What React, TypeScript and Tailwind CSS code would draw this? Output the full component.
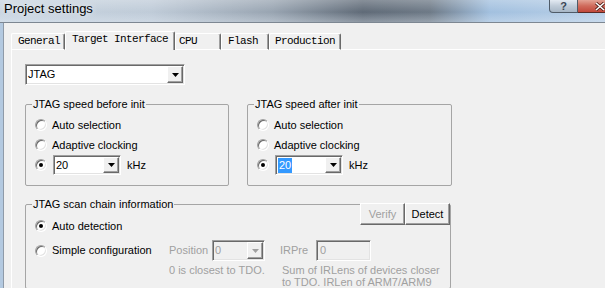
import type { ReactNode } from "react";

const sunken =
  "border border-t-[#a0a0a0] border-l-[#a0a0a0] border-b-white border-r-white shadow-[inset_1px_1px_0_#696969,inset_-1px_-1px_0_#e3e3e3]";

const raised =
  "border border-t-white border-l-white border-b-[#696969] border-r-[#696969] shadow-[inset_-1px_-1px_0_#a0a0a0] bg-[#f0f0f0]";

function Radio({ checked = false }: { checked?: boolean }) {
  return (
    <span
      className={`flex h-[12px] w-[12px] shrink-0 items-center justify-center rounded-full bg-white ${sunken}`}
    >
      {checked && <span className="h-[4px] w-[4px] rounded-full bg-black" />}
    </span>
  );
}

function Arrow({ disabled = false }: { disabled?: boolean }) {
  return (
    <span className={`flex h-full w-[16px] shrink-0 items-center justify-center ${raised}`}>
      <svg width="7" height="4" viewBox="0 0 7 4">
        <path d="M0 0h7L3.5 4z" fill={disabled ? "#a0a0a0" : "#000"} />
      </svg>
    </span>
  );
}

function Combo({
  width,
  children,
  disabled = false,
}: {
  width: string;
  children: ReactNode;
  disabled?: boolean;
}) {
  return (
    <div
      className={`flex h-[21px] shrink-0 items-stretch p-[1px] ${width} ${sunken} ${
        disabled ? "bg-[#f0f0f0] text-[#a0a0a0]" : "bg-white"
      }`}
    >
      <span className="flex flex-1 items-center pl-[1px]">{children}</span>
      <Arrow disabled={disabled} />
    </div>
  );
}

function RadioRow({ checked, label }: { checked?: boolean; label: string }) {
  return (
    <div className="flex h-[20px] items-center pl-[9px]">
      <Radio checked={checked} />
      <span className="ml-[5px]">{label}</span>
    </div>
  );
}

function SpeedGroup({
  title,
  width,
  selected = false,
}: {
  title: string;
  width: string;
  selected?: boolean;
}) {
  return (
    <fieldset className={`${width} rounded-[2px] border border-[#a5a5a5] pt-[4px] pb-[10px]`}>
      <legend className="ml-[6px] px-[1px] leading-[13px]">{title}</legend>
      <RadioRow label="Auto selection" />
      <RadioRow label="Adaptive clocking" />
      <div className="flex h-[20px] items-center pl-[9px]">
        <Radio checked />
        <div className="ml-[6px]">
          <div className={`flex h-[20px] w-[68px] items-stretch bg-white p-[1px] ${sunken}`}>
            <span className="flex flex-1 items-center pl-[1px]">
              {selected ? (
                <span className="bg-[#3399ff] px-[1px] leading-[15px] text-white">20</span>
              ) : (
                "20"
              )}
            </span>
            <Arrow />
          </div>
        </div>
        <span className="ml-[6px]">kHz</span>
      </div>
    </fieldset>
  );
}

const tabs = [
  { label: "General", w: "w-[54px]", pl: "pl-[6px]" },
  { label: "Target Interface", w: "w-[110px]", pl: "pl-[6px]", active: true },
  { label: "CPU", w: "w-[46px]", pl: "pl-[3px]" },
  { label: "Flash", w: "w-[48px]", pl: "pl-[6px]" },
  { label: "Production", w: "w-[72px]", pl: "pl-[5px]" },
];

export default function App() {
  return (
    <div className="flex h-[288px] w-[605px] flex-col overflow-hidden bg-[#f0f0f0] font-['Liberation_Sans',Arial,sans-serif] text-[11px] text-black">
      {/* title bar */}
      <div className="flex h-[23px] shrink-0 items-start border-b border-b-[#7d8792] bg-[linear-gradient(180deg,rgba(255,255,255,0.25)_0%,rgba(255,255,255,0)_55%,rgba(230,238,246,0.35)_100%),linear-gradient(90deg,#c9d5e1_0%,#bfcbd8_25%,#98a4b1_45%,#5f6a77_60%,#6d7986_71%,#a2c0df_81%,#b8cfe7_100%)]">
        <span className="pl-[4px] pt-[1px] text-[13px] leading-[15px] [text-shadow:0_0_6px_rgba(255,255,255,0.95)]">
          Project settings
        </span>
        <div className="ml-auto flex h-[13px] shrink-0">
          <div className="flex w-[29px] items-center justify-center rounded-bl-[4px] border border-t-0 border-[#4f5b68] bg-[linear-gradient(180deg,#e3eaf2_0%,#bfcbd8_50%,#a7b6c6_100%)] text-[11px] font-bold leading-none text-[#3a4654]">
            ?
          </div>
          <div className="-mr-[17px] flex w-[44px] items-center justify-center rounded-br-[4px] border border-l-0 border-t-0 border-[#5a2a25] bg-[linear-gradient(180deg,#e3a395_0%,#cf6a5b_50%,#c2483a_100%)]">
            <svg width="10" height="9" viewBox="0 0 10 9">
              <path d="M1 1l8 7M9 1L1 8" stroke="#4a1a14" strokeWidth="3" />
              <path d="M1 1l8 7M9 1L1 8" stroke="#fff" strokeWidth="1.6" />
            </svg>
          </div>
        </div>
      </div>

      <div className="flex flex-1">
        {/* window frame */}
        <div className="w-[4px] shrink-0 border-r border-r-[#8e9aa8] bg-[#b3c9e0]" />

        <div className="flex flex-1 flex-col pl-[7px] pt-[8px]">
          {/* tabs */}
          <div className="flex h-[19px] items-end font-['Liberation_Mono',monospace] text-[11px] tracking-[-0.6px]">
            {tabs.map((t) =>
              t.active ? (
                <div
                  key={t.label}
                  className={`flex h-[19px] shrink-0 items-center rounded-t-[2px] border-l border-t border-r border-l-white border-t-white border-r-[#696969] pb-[3px] shadow-[inset_-1px_0_0_#a0a0a0] ${t.w} ${t.pl}`}
                >
                  {t.label}
                </div>
              ) : (
                <div
                  key={t.label}
                  className={`flex h-[17px] shrink-0 items-center rounded-t-[2px] border border-l-white border-t-white border-b-white border-r-[#696969] shadow-[inset_-1px_0_0_#a0a0a0] ${t.w} ${t.pl}`}
                >
                  {t.label}
                </div>
              )
            )}
            <div className="h-[1px] flex-1 bg-white" />
          </div>

          {/* tab panel */}
          <div className="flex flex-1 flex-col border-l border-l-white pl-[13px] pt-[14px]">
            <Combo width="w-[160px]">JTAG</Combo>

            <div className="mt-[13px] flex gap-[18px]">
              <SpeedGroup title="JTAG speed before init" width="w-[204px]" />
              <SpeedGroup title="JTAG speed after init" width="w-[205px]" selected />
            </div>

            <fieldset className="mt-[12px] w-[426px] rounded-[2px] border border-[#a5a5a5] pt-[5px]">
              <legend className="ml-[6px] px-[1px] leading-[13px]">
                JTAG scan chain information
              </legend>

              <div className="flex h-[20px] items-center pl-[9px]">
                <Radio checked />
                <span className="ml-[5px]">Auto detection</span>
                <div className="-mt-[13px] ml-auto flex self-start">
                  <button
                    type="button"
                    className={`h-[22px] w-[45px] text-[#a0a0a0] ${raised}`}
                  >
                    Verify
                  </button>
                  <button type="button" className={`h-[22px] w-[45px] ${raised}`}>
                    Detect
                  </button>
                </div>
              </div>

              <div className="mt-[4px] flex items-start">
                <div className="flex h-[21px] w-[143px] shrink-0 items-center pl-[9px]">
                  <Radio />
                  <span className="ml-[5px]">Simple configuration</span>
                </div>

                <div className="flex w-[111px] shrink-0 flex-col text-[#a0a0a0]">
                  <div className="flex h-[21px] items-center">
                    <span className="w-[43px]">Position</span>
                    <Combo width="w-[53px]" disabled>
                      0
                    </Combo>
                  </div>
                  <p className="mt-[3px] leading-[12px]">0 is closest to TDO.</p>
                </div>

                <div className="flex flex-col text-[#a0a0a0]">
                  <div className="flex h-[21px] items-center">
                    <span className="w-[36px]">IRPre</span>
                    <div
                      className={`flex h-[21px] w-[55px] items-center bg-[#f0f0f0] pl-[3px] ${sunken}`}
                    >
                      0
                    </div>
                  </div>
                  <p className="mt-[3px] pl-[2px] leading-[12px]">
                    Sum of IRLens of devices closer
                    <br />
                    to TDO. IRLen of ARM7/ARM9
                  </p>
                </div>
              </div>
            </fieldset>
          </div>
        </div>
      </div>
    </div>
  );
}
